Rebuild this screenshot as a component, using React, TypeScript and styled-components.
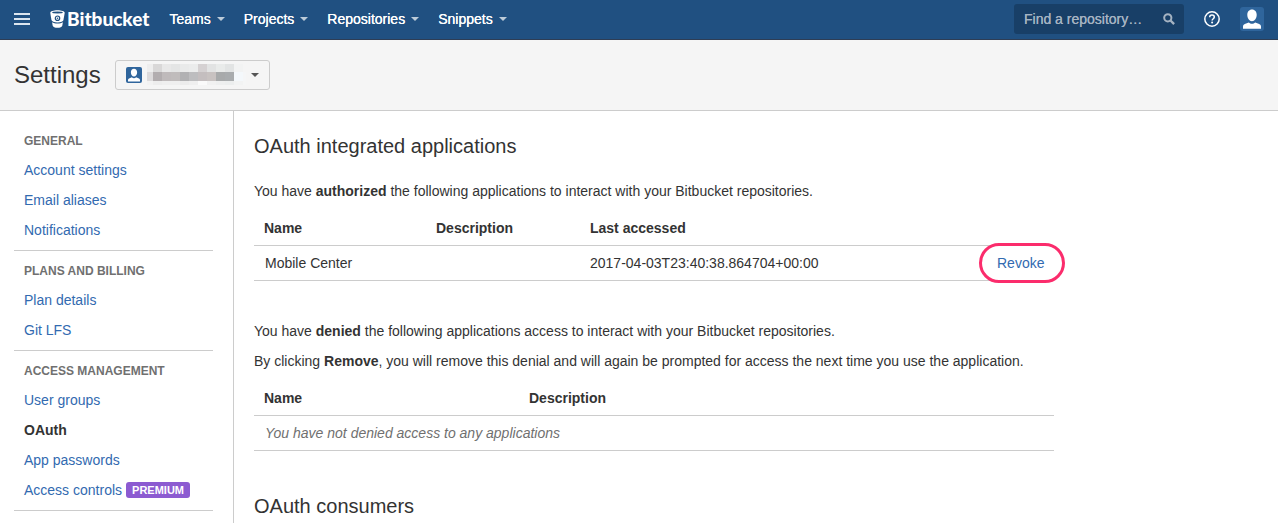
import React from "react";
import styled, { createGlobalStyle } from "styled-components";

const GlobalStyle = createGlobalStyle`
  *, *::before, *::after { box-sizing: border-box; }
  html, body { margin: 0; background: #fff; overflow-x: hidden; }
  body, button, input {
    font-family: "Liberation Sans", Arial, Helvetica, sans-serif;
    font-size: 14px;
    line-height: 20px;
    color: #333;
  }
  button { border: 0; padding: 0; background: none; cursor: pointer; }
  svg { display: block; flex: none; }
`;

const Page = styled.div`
  display: flex;
  flex-direction: column;
  min-height: 100vh;
`;

const TopBar = styled.header`
  display: flex;
  align-items: center;
  justify-content: space-between;
  height: 40px;
  padding: 0 14px 1px;
  background: #205081;
  border-bottom: 1px solid #2e3d54;
`;

const BarGroup = styled.div`
  display: flex;
  align-items: center;
  gap: 20px;
`;

const IconButton = styled.button`
  display: flex;
`;

const Brand = styled.a`
  display: flex;
  align-items: center;
  gap: 2px;
  color: #fff;
  text-decoration: none;
  font-family: Lato, "Open Sans", sans-serif;
  font-size: 19px;
  font-weight: 900;
`;

const MainNav = styled.nav`
  display: flex;
  gap: 19px;
`;

const NavButton = styled.button`
  display: flex;
  align-items: center;
  gap: 6px;
  color: #fff;
  text-shadow: 0 0 0 #fff;
`;

const Caret = styled.span<{ $color: string }>`
  border: 4px solid transparent;
  border-top-color: ${(p) => p.$color};
  border-bottom: 0;
`;

const SearchBox = styled.form`
  display: flex;
  align-items: center;
  width: 170px;
  height: 30px;
  padding: 0 9px 0 10px;
  border-radius: 3px;
  background: #183f67;
`;

const SearchInput = styled.input`
  flex: 1;
  min-width: 0;
  padding: 0;
  border: 0;
  outline: 0;
  background: none;
  color: #fff;
  &::placeholder {
    color: #a5b3c2;
    opacity: 1;
    text-shadow: 0 0 0 #a5b3c2;
  }
`;

const PageHeader = styled.div`
  display: flex;
  align-items: center;
  gap: 14px;
  height: 71px;
  padding: 0 14px;
  background: #f5f5f5;
  border-bottom: 1px solid #ccc;
`;

const PageTitle = styled.h1`
  margin: 0;
  font-size: 24px;
  line-height: 30px;
  font-weight: 400;
`;

const AccountPicker = styled.button`
  display: flex;
  align-items: center;
  height: 30px;
  padding: 0 10px;
  gap: 5px;
  border: 1px solid #ccc;
  border-radius: 3px;
`;

const Body = styled.div`
  display: flex;
  flex: 1;
`;

const Sidebar = styled.nav`
  flex: none;
  width: 234px;
  padding: 10px 20px 0 14px;
  border-right: 1px solid #ccc;
`;

const SideSection = styled.section`
  padding: 0 10px 5px;
  border-bottom: 1px solid #ccc;
`;

const SideHeading = styled.h2`
  margin: 0;
  padding: 9px 0 3px;
  font-size: 12px;
  line-height: 22px;
  font-weight: 700;
  color: #707070;
`;

const SideList = styled.ul`
  margin: 0;
  padding: 0;
  list-style: none;
`;

const SideItem = styled.li`
  display: flex;
  align-items: center;
  gap: 4px;
  height: 30px;
`;

const Link = styled.a<{ $current?: boolean }>`
  color: ${(p) => (p.$current ? "#333" : "#326ab0")};
  font-weight: ${(p) => (p.$current ? 700 : 400)};
  text-decoration: none;
`;

const Badge = styled.span`
  padding: 0 6px;
  border-radius: 3px;
  background: #8c5bd1;
  color: #fff;
  font-size: 11px;
  line-height: 16px;
  font-weight: 700;
`;

const Main = styled.main`
  flex: 1;
  min-width: 0;
  max-width: 820px;
  padding: 20px 0 0 20px;
`;

const SectionTitle = styled.h2`
  margin: 0;
  font-size: 20px;
  line-height: 30px;
  font-weight: 400;
`;

const Text = styled.p<{ $top: number }>`
  margin: ${(p) => p.$top}px 0 0;
`;

const Table = styled.table`
  width: 100%;
  margin: 10px 0 40px;
  border-collapse: separate;
  border-spacing: 0;
  table-layout: fixed;
  th, td {
    height: 35px;
    padding: 0 10px;
    border-bottom: 1px solid #ccc;
    text-align: left;
  }
  td:first-child, td:last-child {
    padding-left: 11px;
  }
`;

const Column = styled.col<{ $width?: number }>`
  width: ${(p) => (p.$width ? p.$width + "px" : "auto")};
`;

const EmptyCell = styled.td`
  color: #707070;
  font-style: italic;
`;

const Highlighted = styled.span`
  position: relative;
  display: inline-block;
  z-index: 0;
  &::before {
    content: "";
    position: absolute;
    z-index: -1;
    inset: -10px -21px -10px -18px;
    border: 3px solid #fb2c6c;
    border-radius: 20px;
    background: #fff;
  }
`;

const MenuIcon = () => (
  <svg width="16" height="12" viewBox="0 0 16 12" fill="#dbe5ef">
    <path d="M0 0h16v2H0zM0 5h16v2H0zM0 10h16v2H0z" />
  </svg>
);

const BucketLogo = () => (
  <svg width="15" height="18" viewBox="0 0 15 18">
    <path
      fill="#fff"
      d="M7.500 .2C3.500 .2 .3 1.300 .3 2.700c0 .4.900 5.500 1.300 7.600.2 1.200 2.500 2.300 5.900 2.300s5.700-1.100 5.900-2.300c.4-2.100 1.300-7.200 1.300-7.600C14.700 1.300 11.500.2 7.500.2zM2.100 12.200c.2 1.200.5 2.700.6 3.500.3 1.200 2.200 2.100 4.800 2.100s4.500-.9 4.800-2.100c.1-.8.4-2.300.6-3.500-1.300.9-3.200 1.400-5.400 1.400s-4.100-.5-5.400-1.400z"
    />
    <ellipse cx="7.500" cy="2.500" rx="5.300" ry=".9" fill="#205081" />
    <circle cx="7.500" cy="8.200" r="2.200" fill="#fff" stroke="#205081" strokeWidth="1.200" />
    <circle cx="7.500" cy="8.200" r=".8" fill="#205081" />
  </svg>
);

const SearchIcon = () => (
  <svg width="12" height="12" viewBox="0 0 12 12" fill="none" stroke="#a5b3c2" strokeWidth="2">
    <circle cx="4.800" cy="4.800" r="3.600" />
    <path d="M7.500 7.500l3.600 3.600" strokeWidth="2.400" />
  </svg>
);

const HelpIcon = () => (
  <svg width="16" height="16" viewBox="0 0 16 16" fill="none" stroke="#fff">
    <circle cx="8" cy="8" r="7.200" strokeWidth="1.500" />
    <path d="M5.700 6.300C5.700 4.900 6.700 4.100 8 4.100s2.300.8 2.300 2c0 1.600-2.200 1.700-2.200 3.400" strokeWidth="1.500" />
    <circle cx="8.100" cy="11.600" r="1" fill="#fff" stroke="none" />
  </svg>
);

const Avatar = ({ size, fill }: { size: number; fill: string }) => (
  <svg width={size} height={size} viewBox="0 0 24 24">
    <rect width="24" height="24" rx="3" fill={fill} />
    <path
      fill="#fff"
      d="M12 2.500c-2.900 0-4.700 2.300-4.700 5.300 0 3.500 2 6.500 4.700 6.500s4.700-3 4.700-6.500c0-3-1.800-5.300-4.700-5.300zM3 21.800v-2.300c0-1.400 1-2.300 2.400-2.800l3.400-1.200c.9.900 2 1.300 3.200 1.300s2.300-.4 3.200-1.300l3.400 1.200c1.400.5 2.400 1.400 2.400 2.800v2.300z"
    />
  </svg>
);

const MOSAIC_X = [0, 6, 15, 24, 33, 42, 51, 60, 69, 78, 87, 96];
const MOSAIC_ROWS = [
  { y: 0, h: 8, c: ["#eeeeee", "#d9d8d8", "#e8e8e8", "#e4e5e5", "#e9eaea", "#ebecec", "#d5d1d2", "#e2e3e3", "#e9ebea", "#e2e4e4", "#f2f3f3", "#f5f5f5"] },
  { y: 8, h: 9, c: ["#dcdadb", "#b2adaf", "#bfbabb", "#c0bcbc", "#b1b1b3", "#bdbdbf", "#c4bebf", "#c8c2c1", "#a8aaab", "#a9acae", "#f4f8fb", "#f5f6f7"] },
  { y: 17, h: 4, c: ["#f2f2f2", "#ededed", "#efefef", "#efefef", "#ececec", "#efefef", "#fafafa", "#f1f1f1", "#eeefef", "#eceeee", "#f2f3f3", "#f5f6f6"] },
];

const MaskedName = () => (
  <svg width="99" height="22" viewBox="0 0 99 22" shapeRendering="crispEdges" role="img" aria-label="Account name hidden">
    {MOSAIC_ROWS.map((row) =>
      row.c.map((color, i) => (
        <rect
          key={row.y + "-" + i}
          x={MOSAIC_X[i]}
          y={row.y}
          width={(MOSAIC_X[i + 1] ?? 99) - MOSAIC_X[i]}
          height={row.h}
          fill={color}
        />
      ))
    )}
  </svg>
);

const MENUS = ["Teams", "Projects", "Repositories", "Snippets"];

const SECTIONS: { title: string; items: { label: string; current?: boolean; badge?: string }[] }[] = [
  {
    title: "GENERAL",
    items: [{ label: "Account settings" }, { label: "Email aliases" }, { label: "Notifications" }],
  },
  { title: "PLANS AND BILLING", items: [{ label: "Plan details" }, { label: "Git LFS" }] },
  {
    title: "ACCESS MANAGEMENT",
    items: [
      { label: "User groups" },
      { label: "OAuth", current: true },
      { label: "App passwords" },
      { label: "Access controls", badge: "PREMIUM" },
    ],
  },
];

export default function App() {
  return (
    <Page>
      <GlobalStyle />
      <TopBar>
        <BarGroup>
          <IconButton aria-label="Menu">
            <MenuIcon />
          </IconButton>
          <Brand href="#">
            <BucketLogo />
            Bitbucket
          </Brand>
          <MainNav>
            {MENUS.map((label) => (
              <NavButton key={label} aria-haspopup="menu">
                {label}
                <Caret $color="#bccbd9" />
              </NavButton>
            ))}
          </MainNav>
        </BarGroup>
        <BarGroup>
          <SearchBox role="search">
            <SearchInput type="text" placeholder="Find a repository…" aria-label="Find a repository" />
            <IconButton type="button" aria-label="Search">
              <SearchIcon />
            </IconButton>
          </SearchBox>
          <IconButton aria-label="Help">
            <HelpIcon />
          </IconButton>
          <IconButton aria-label="Profile">
            <Avatar size={24} fill="#2f659c" />
          </IconButton>
        </BarGroup>
      </TopBar>

      <PageHeader>
        <PageTitle>Settings</PageTitle>
        <AccountPicker aria-haspopup="listbox" aria-label="Account">
          <Avatar size={16} fill="#2f659c" />
          <MaskedName />
          <Caret $color="#555" />
        </AccountPicker>
      </PageHeader>

      <Body>
        <Sidebar aria-label="Settings">
          {SECTIONS.map((section) => (
            <SideSection key={section.title}>
              <SideHeading>{section.title}</SideHeading>
              <SideList>
                {section.items.map((item) => (
                  <SideItem key={item.label}>
                    <Link href="#" $current={item.current} aria-current={item.current ? "page" : undefined}>
                      {item.label}
                    </Link>
                    {item.badge && <Badge>{item.badge}</Badge>}
                  </SideItem>
                ))}
              </SideList>
            </SideSection>
          ))}
        </Sidebar>

        <Main>
          <SectionTitle>OAuth integrated applications</SectionTitle>
          <Text $top={20}>
            You have <strong>authorized</strong> the following applications to interact with your Bitbucket
            repositories.
          </Text>
          <Table>
            <colgroup>
              <Column $width={172} />
              <Column $width={154} />
              <Column />
              <Column $width={68} />
            </colgroup>
            <thead>
              <tr>
                <th scope="col">Name</th>
                <th scope="col">Description</th>
                <th scope="col">Last accessed</th>
                <th aria-label="Actions" />
              </tr>
            </thead>
            <tbody>
              <tr>
                <td>Mobile Center</td>
                <td />
                <td>2017-04-03T23:40:38.864704+00:00</td>
                <td>
                  <Highlighted>
                    <Link href="#">Revoke</Link>
                  </Highlighted>
                </td>
              </tr>
            </tbody>
          </Table>
          <Text $top={0}>
            You have <strong>denied</strong> the following applications access to interact with your Bitbucket
            repositories.
          </Text>
          <Text $top={10}>
            By clicking <strong>Remove</strong>, you will remove this denial and will again be prompted for access
            the next time you use the application.
          </Text>
          <Table>
            <colgroup>
              <Column $width={265} />
              <Column />
            </colgroup>
            <thead>
              <tr>
                <th scope="col">Name</th>
                <th scope="col">Description</th>
              </tr>
            </thead>
            <tbody>
              <tr>
                <EmptyCell colSpan={2}>You have not denied access to any applications</EmptyCell>
              </tr>
            </tbody>
          </Table>
          <SectionTitle>OAuth consumers</SectionTitle>
        </Main>
      </Body>
    </Page>
  );
}
